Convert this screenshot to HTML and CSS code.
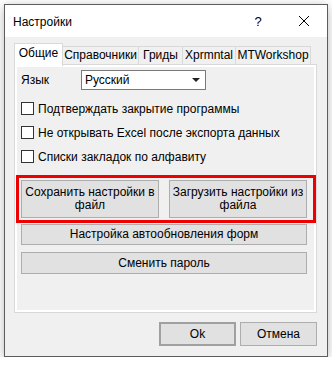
FILE: index.html
```html
<!DOCTYPE html>
<html lang="ru">
<head>
    <meta charset="UTF-8">
    <title>Настройки</title>
    <link rel="stylesheet" href="styles.css">
</head>
<body>
    <div class="window">
        <div class="titlebar">
            <span class="title">Настройки</span>
            <div class="caption">
                <span class="cap-btn">?</span>
                <span class="cap-btn">
                    <svg width="10" height="10" viewBox="0 0 10 10">
                        <path d="M0 0 L10 10 M10 0 L0 10" stroke="#000" stroke-width="1" fill="none"/>
                    </svg>
                </span>
            </div>
        </div>
        <div class="content">
            <div class="tabs">
                <div class="tab selected t1">Общие</div>
                <div class="tab t2">Справочники</div>
                <div class="tab t3">Гриды</div>
                <div class="tab t4">Xprmntal</div>
                <div class="tab t5">MTWorkshop</div>
            </div>
            <div class="page">
                <div class="row">
                    <span class="label">Язык</span>
                    <div class="combo">
                        <span>Русский</span>
                        <span class="arrow"></span>
                    </div>
                </div>
                <label class="check"><span class="box"></span>Подтверждать закрытие программы</label>
                <label class="check"><span class="box"></span>Не открывать Excel после экспорта данных</label>
                <label class="check"><span class="box"></span>Списки закладок по алфавиту</label>

                <div class="marked">
                    <button class="btn tall">Сохранить настройки в<br>файл</button>
                    <button class="btn tall">Загрузить настройки из<br>файла</button>
                </div>
                <button class="btn wide">Настройка автообновления форм</button>
                <button class="btn wide second">Сменить пароль</button>
            </div>
            <div class="footer">
                <button class="btn dlg default">Ok</button>
                <button class="btn dlg">Отмена</button>
            </div>
        </div>
    </div>
</body>
</html>
```

FILE: styles.css
```css
body {
    margin: 0;
    background: #ffffff;
    font-family: "Liberation Sans", Arial, sans-serif;
    font-size: 12px;
    color: #000;
}
.window {
    margin: 4px 0 0 4px;
    width: 324px;
    height: 353px;
    box-sizing: border-box;
    border: 1px solid #5c5c5c;
    background: #f0f0f0;
    box-shadow: 0 2px 10px rgba(0, 0, 0, 0.28);
    display: flex;
    flex-direction: column;
}
.titlebar {
    height: 32px;
    background: #fff;
    display: flex;
    align-items: center;
    padding-left: 8px;
}
.title {
    font-size: 12px;
    padding-top: 1px;
}
.caption {
    margin-left: auto;
    display: flex;
    height: 100%;
}
.cap-btn {
    width: 46px;
    display: flex;
    align-items: center;
    justify-content: center;
    font-size: 13px;
}
.content {
    padding: 6px 0 0 9px;
    flex: 1;
    display: flex;
    flex-direction: column;
}
.tabs {
    display: flex;
    align-items: flex-end;
    height: 21px;
    position: relative;
    z-index: 1;
}
.tab {
    height: 18px;
    box-sizing: border-box;
    border: 1px solid #d9d9d9;
    border-bottom: none;
    margin-left: -1px;
    line-height: 16px;
    text-align: center;
    background: #f0f0f0;
}
.tab.selected {
    margin-left: 0;
    height: 23px;
    margin-bottom: -2px;
    background: #fff;
    line-height: 19px;
}
.t1 { width: 49px; }
.t2 { width: 77px; }
.t3 { width: 45px; }
.t4 { width: 54px; }
.t5 { width: 76px; }
.page {
    width: 303px;
    height: 249px;
    box-sizing: border-box;
    border: 1px solid #d9d9d9;
    box-shadow: inset 0 0 0 2px #fff;
    padding: 5px 8px 0 6px;
    display: flex;
    flex-direction: column;
}
.row {
    display: flex;
    align-items: center;
    height: 20px;
}
.label {
    width: 60px;
}
.combo {
    width: 125px;
    height: 20px;
    box-sizing: border-box;
    border: 1px solid #7a7a7a;
    background: #fff;
    display: flex;
    align-items: center;
    padding: 0 5px 0 3px;
}
.arrow {
    margin-left: auto;
    width: 0;
    height: 0;
    border-left: 4px solid transparent;
    border-right: 4px solid transparent;
    border-top: 4px solid #222;
}
.check {
    display: flex;
    align-items: center;
    height: 13px;
    margin-top: 11px;
}
.check:first-of-type {
    margin-top: 12px;
}
.box {
    width: 13px;
    height: 13px;
    box-sizing: border-box;
    border: 1px solid #333;
    background: #fff;
    margin-right: 4px;
}
.btn {
    font-family: inherit;
    font-size: 12px;
    color: #000;
    background: #e1e1e1;
    border: 1px solid #adadad;
    padding: 0;
    line-height: 13px;
}
.marked {
    margin: 12px -8px 0 -5px;
    border: 3px solid #ee0000;
    padding: 2px 6px 2px 2px;
    display: flex;
    gap: 10px;
}
.tall {
    width: 138px;
    height: 38px;
}
.wide {
    height: 21px;
    margin-top: 1px;
    width: 286px;
}
.wide.second {
    margin-top: 7px;
    height: 22px;
}
.footer {
    display: flex;
    justify-content: flex-end;
    gap: 4px;
    padding: 9px 10px 0 0;
}
.dlg {
    width: 77px;
    height: 24px;
}
.default {
    border: 2px solid #a0a0a0;
}
```
